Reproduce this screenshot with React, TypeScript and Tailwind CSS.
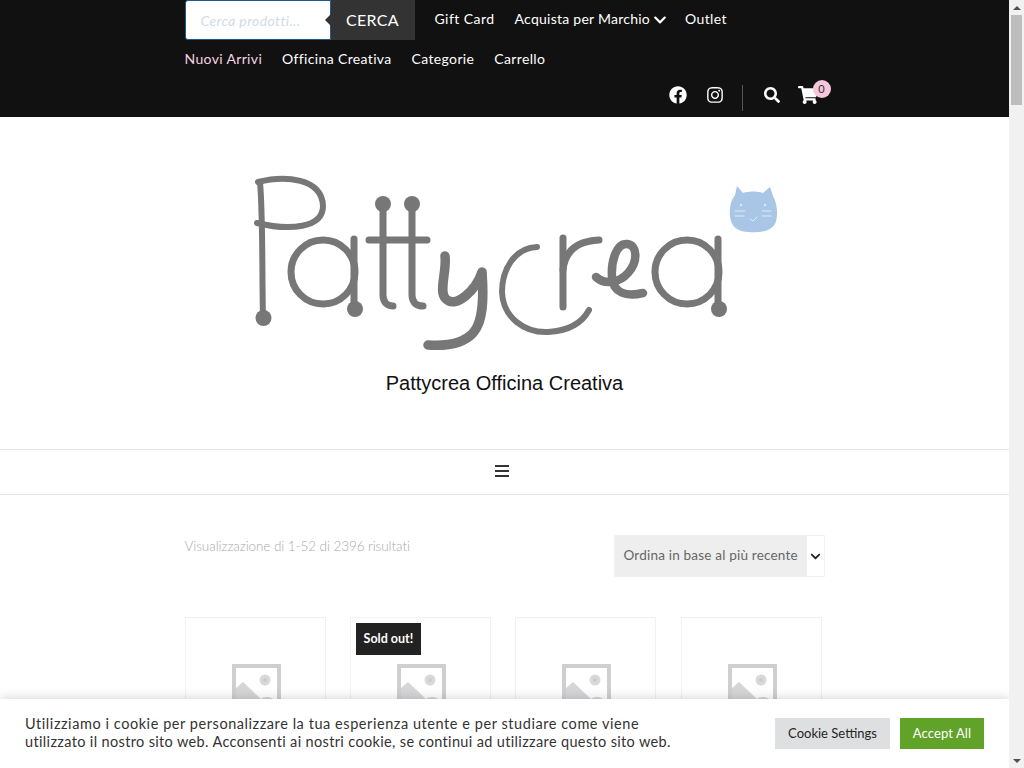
import { FaChevronDown, FaFacebook, FaInstagram, FaSearch, FaShoppingCart } from "react-icons/fa";

const font = "font-['Lato','Liberation_Sans',sans-serif]";

function Logo() {
  return (
    <svg width="570" height="190" viewBox="220 170 570 190" fill="none" stroke="#777" strokeLinecap="round" strokeLinejoin="round">
      {/* P */}
      <path strokeWidth="6" d="M260 182 C263 215 262 280 263 318" />
      <path strokeWidth="6" d="M258 182 C285 175 322 178 323 206 C323 228 290 231 257 223" />
      <circle cx="263.5" cy="318" r="8" fill="#777" stroke="none" />
      {/* a */}
      <circle cx="323" cy="272" r="32" strokeWidth="7" />
      <path strokeWidth="7" d="M354 239 V308" />
      <circle cx="355" cy="309" r="8" fill="#777" stroke="none" />
      {/* tt */}
      <circle cx="383" cy="204" r="8" fill="#777" stroke="none" />
      <circle cx="412" cy="204" r="8" fill="#777" stroke="none" />
      <path strokeWidth="7" d="M383 204 V295 C383 303 388 306 393 306" />
      <path strokeWidth="7" d="M412 204 V295 C412 303 417 306 423 306" />
      <path strokeWidth="7" d="M369 240 H427" />
      {/* y */}
      <path strokeWidth="9.5" d="M445 256 C447 272 438 292 446 299 C456 309 476 290 482 272 C484 300 483 322 473 333 C462 345 442 346 428 345" />
      {/* c */}
      <path strokeWidth="6" d="M537 247 C514 248 502 270 502 292 C503 318 525 333 548 332 C568 331 582 323 589 310" />
      {/* r */}
      <path strokeWidth="7" d="M563 238 V307" />
      <path strokeWidth="7" d="M563 270 C565 250 578 241 599 240" />
      {/* e */}
      <path strokeWidth="8.5" d="M596 277 C606 286 620 282 628 273 C638 262 638 245 627 244 C616 243 611 262 612 277 C613 293 626 297 643 293" />
      {/* a */}
      <circle cx="687" cy="272" r="32" strokeWidth="7" />
      <path strokeWidth="7" d="M718 239 V308" />
      <circle cx="719" cy="309" r="8" fill="#777" stroke="none" />
      {/* cat */}
      <path
        fill="#a9c6e6"
        stroke="none"
        d="M737 186 L743 193 C749 191 757 191 763 193 L770 187 L773 196 C778 204 778 218 775 224 C770 232 758 233 749 232 C738 232 731 227 730 216 C729 208 731 200 735 195 Z"
      />
      <g stroke="#dfeaf6" strokeWidth="1">
        <path d="M735 211 H745 M735 216 H744 M762 216 H771 M762 211 H771 M750 219 L753 221 L757 217" />
      </g>
      <circle cx="741" cy="205" r="1.2" fill="#dfeaf6" stroke="none" />
      <circle cx="765" cy="205" r="1.2" fill="#dfeaf6" stroke="none" />
    </svg>
  );
}

function Placeholder() {
  return (
    <svg width="49" height="50" viewBox="0 0 49 50" className="ml-[2px]">
      <path fill="#cfcfd2" fillRule="evenodd" d="M0 0 H49 V50 H0 Z M4 4 V46 H45 V4 Z" />
      <circle cx="33" cy="16" r="5.5" fill="#d9d9db" />
      <circle cx="33" cy="16" r="2" fill="#cbcbce" />
      <path fill="#d6d6d9" d="M4 24 L11 18 L29 35 C32 32 40 32 45 38 V46 H4 Z" />
    </svg>
  );
}

function ProductCard({ soldOut }: { soldOut?: boolean }) {
  return (
    <div className="relative h-[180px] border border-[#f1f1f1] pt-[46px] flex justify-center items-start">
      {soldOut && (
        <span className="absolute left-[5px] top-[5px] w-[65px] text-center bg-[#222] text-white text-[12.5px] font-bold leading-[32px]">
          Sold out!
        </span>
      )}
      <Placeholder />
    </div>
  );
}

export default function App() {
  const navLink = "text-white text-[14px] tracking-[0.35px]";

  return (
    <div className={`h-screen overflow-hidden flex bg-white ${font}`}>
      <div className="relative flex-1 min-w-0 overflow-hidden">
        <header className="bg-[#111] h-[117px]">
          <div className="mx-auto w-[640px]">
            <div className="flex items-center h-10">
              <div className="w-[146px] h-10 bg-white border border-[#1d5a8c] rounded-l-[3px] flex items-center pl-[15px]">
                <span className="text-[14px] italic text-[#d0dbe5] tracking-[0.4px]">Cerca prodotti...</span>
              </div>
              <div className="relative w-[84px] h-10 bg-[#333] text-white text-[16px] tracking-[0.3px] flex items-center justify-center">
                <span className="absolute -left-[6px] top-[14px] w-0 h-0 border-y-[6px] border-y-transparent border-r-[6px] border-r-[#333]" />
                CERCA
              </div>
              <nav className="flex items-center ml-5 -mt-[3px]">
                <a className="text-white text-[14px] tracking-[0.45px] mr-5">Gift Card</a>
                <a className="text-white text-[14px] mr-[18px] flex items-center gap-[3px]">
                  <span className="tracking-[0.25px]">Acquista per Marchio</span>
                  <FaChevronDown className="text-[14px] mt-[3px]" />
                </a>
                <a className={navLink}>Outlet</a>
              </nav>
            </div>
            <nav className="flex items-center gap-5 h-[38px] -mt-[1px]">
              <a className="text-[#f6d3e2] text-[14px] tracking-[0.35px]">Nuovi Arrivi</a>
              <a className={navLink}>Officina Creativa</a>
              <a className={navLink}>Categorie</a>
              <a className={navLink}>Carrello</a>
            </nav>
            <div className="flex items-center justify-end h-[39px] pt-[1px] text-white">
              <FaFacebook className="text-[18px] mr-[19px] -mt-1" />
              <FaInstagram className="text-[18px] mr-[18px] -mt-1" />
              <span className="w-px h-[26px] bg-[#555] mr-[21px] mt-[2px]" />
              <FaSearch className="text-[16px] mr-[18px] -mt-1" />
              <div className="relative -mt-1 mr-[7px]">
                <FaShoppingCart className="text-[20px]" />
                <span className="absolute -top-[5px] -right-[13px] w-[18px] h-[18px] rounded-full bg-[#f5c6dc] text-[#333] text-[11px] flex items-center justify-center">
                  0
                </span>
              </div>
            </div>
          </div>
        </header>

        <div className="h-[332px] flex flex-col items-center">
          <div className="mt-[53px]">
            <Logo />
          </div>
          <h1 className="mt-[9px] font-['Liberation_Sans',sans-serif] text-[20px] leading-[28px] text-[#111]">
            Pattycrea Officina Creativa
          </h1>
        </div>

        <div className="h-[46px] border-y border-[#e6e6e6] flex flex-col items-center justify-center gap-[3px] pr-[5px] pb-[2px]">
          <span className="w-[14px] h-[2px] bg-[#333]" />
          <span className="w-[14px] h-[2px] bg-[#333]" />
          <span className="w-[14px] h-[2px] bg-[#333]" />
        </div>

        <main className="mx-auto w-[640px] pt-10">
          <div className="flex justify-between items-start h-[82px]">
            <p className="text-[13.5px] font-light text-[#aaa] leading-[22px] tracking-[-0.08px]">
              Visualizzazione di 1-52 di 2396 risultati
            </p>
            <div className="w-[211px] h-[42px] border border-[#f2f2f2] flex text-[13.5px] text-[#666]">
              <div className="w-[192px] bg-[#eee] flex items-center pl-[9px] pb-[2px] tracking-[0.2px]">Ordina in base al più recente</div>
              <div className="flex-1 flex items-center justify-center text-[#222]">
                <FaChevronDown className="text-[11px]" />
              </div>
            </div>
          </div>
          <div className="grid grid-cols-4 gap-x-[24.4px] w-[637.2px]">
            <ProductCard />
            <ProductCard soldOut />
            <ProductCard />
            <ProductCard />
          </div>
        </main>

        <div className="absolute left-0 right-0 bottom-0 h-[69px] bg-white shadow-[0_-1px_10px_rgba(0,0,0,0.17)] flex items-center justify-between pl-[25px] pr-[25px]">
          <div className="text-[14.5px] leading-[18px] text-[#333] -mt-[1px]">
            <p className="tracking-[0.56px]">Utilizziamo i cookie per personalizzare la tua esperienza utente e per studiare come viene</p>
            <p className="tracking-[0.35px]">utilizzato il nostro sito web. Acconsenti ai nostri cookie, se continui ad utilizzare questo sito web.</p>
          </div>
          <div className="flex gap-[10px]">
            <button className="w-[115px] h-[31px] bg-[#dedfe0] text-[#252525] text-[13px]">Cookie Settings</button>
            <button className="w-[84px] h-[31px] bg-[#61a229] text-white text-[13px] tracking-[0.1px]">Accept All</button>
          </div>
        </div>
      </div>

      <div className="w-[15px] shrink-0 bg-[#f1f1f1] flex flex-col">
        <div className="h-[15px] flex items-center justify-center">
          <span className="w-0 h-0 border-x-[4px] border-x-transparent border-b-[4px] border-b-[#505050]" />
        </div>
        <div className="h-[90px] mx-[2px] bg-[#bdbdbd]" />
        <div className="flex-1" />
        <div className="h-[15px] flex items-center justify-center">
          <span className="w-0 h-0 border-x-[4px] border-x-transparent border-t-[4px] border-t-[#505050]" />
        </div>
      </div>
    </div>
  );
}
